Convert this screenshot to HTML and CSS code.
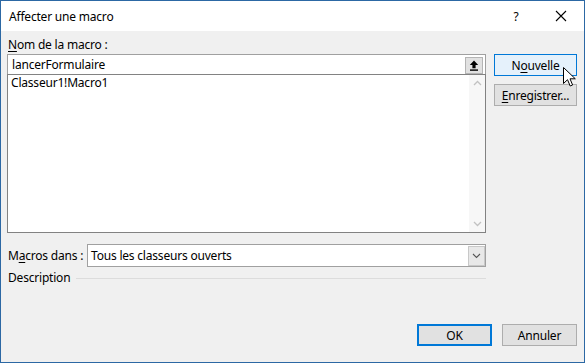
FILE: index.html
```html
<!DOCTYPE html>
<html lang="fr">
<head>
    <meta charset="UTF-8">
    <title>Affecter une macro</title>
    <link rel="stylesheet" href="styles.css">
</head>
<body>
<div class="dialog">
    <div class="titlebar">
        <span class="title">Affecter une macro</span>
        <span class="help">?</span>
        <span class="close">
            <svg width="12" height="12" viewBox="0 0 12 12"><path d="M1 1L11 11M11 1L1 11" stroke="#000" stroke-width="1.1" fill="none"/></svg>
        </span>
    </div>
    <div class="content">
        <div class="main">
            <div class="left">
                <div class="label"><u>N</u>om de la macro :</div>
                <div class="namebox">
                    <span>lancerFormulaire</span>
                    <span class="refbtn">
                        <svg width="10" height="11" viewBox="0 0 10 11"><path d="M5 0.5L0.8 5H3.4V8.3H6.6V5H9.2Z" fill="#000"/><rect x="1" y="9.4" width="8" height="1.4" fill="#000"/></svg>
                    </span>
                </div>
                <div class="listbox">
                    <div class="items">
                        <div class="item">Classeur1!Macro1</div>
                    </div>
                    <div class="scrollbar">
                        <svg width="9" height="6" viewBox="0 0 9 6"><path d="M1 5L4.5 1.5L8 5" stroke="#c2c2c2" stroke-width="1.3" fill="none"/></svg>
                        <svg width="9" height="6" viewBox="0 0 9 6"><path d="M1 1L4.5 4.5L8 1" stroke="#c2c2c2" stroke-width="1.3" fill="none"/></svg>
                    </div>
                </div>
                <div class="row">
                    <span class="rowlabel">M<u>a</u>cros dans :</span>
                    <div class="select">
                        <span>Tous les classeurs ouverts</span>
                        <span class="dropbtn">
                            <svg width="9" height="6" viewBox="0 0 9 6"><path d="M1 1L4.5 4.5L8 1" stroke="#555" stroke-width="1.1" fill="none"/></svg>
                        </span>
                    </div>
                </div>
                <div class="group">
                    <span>Description</span>
                    <span class="rule"></span>
                </div>
            </div>
            <div class="right">
                <div class="btn hot">N<u>o</u>uvelle</div>
                <div class="btn"><u>E</u>nregistrer...</div>
            </div>
        </div>
        <div class="footer">
            <div class="btn default">OK</div>
            <div class="btn">Annuler</div>
        </div>
    </div>
    <svg class="cursor" width="13" height="21" viewBox="0 0 13 21"><path d="M0.5 0.5V16.5L4.5 12.7L7.2 19L9.6 18L7 11.8H12.3Z" fill="#fff" stroke="#000" stroke-width="1"/></svg>
</div>
</body>
</html>
```

FILE: styles.css
```css
body {
    margin: 0;
    font-family: "Noto Sans", "Open Sans", sans-serif;
    font-size: 12px;
    letter-spacing: -0.2px;
    color: #000;
}
.dialog {
    position: relative;
    width: 585px;
    height: 363px;
    box-sizing: border-box;
    border: 1px solid #2c68a4;
    display: flex;
    flex-direction: column;
    background-color: #f0f0f0;
}
.titlebar {
    height: 30px;
    background-color: #fff;
    display: flex;
    align-items: center;
    padding-left: 8px;
    flex-shrink: 0;
}
.title {
    flex: 1;
}
.help {
    width: 20px;
    text-align: center;
    margin-right: 29px;
}
.close {
    width: 12px;
    margin-right: 17px;
    display: flex;
}
.content {
    flex: 1;
    display: flex;
    flex-direction: column;
    padding: 0 7px 16px 6px;
}
.main {
    display: flex;
    gap: 8px;
}
.left {
    width: 479px;
}
.label {
    padding: 6px 0 0 1px;
    line-height: 16px;
    margin-bottom: 1px;
}
u {
    text-decoration-thickness: 1px;
    text-underline-offset: 2px;
}
.namebox {
    height: 20px;
    box-sizing: border-box;
    border: 1px solid #a0a0a0;
    border-bottom: none;
    background-color: #fff;
    display: flex;
    align-items: center;
    padding-left: 4px;
}
.namebox span:first-child {
    flex: 1;
}
.refbtn {
    width: 18px;
    height: 17px;
    box-sizing: border-box;
    background-color: #e1e1e1;
    border: 1px solid #b4b4b4;
    margin: 1px 2px 0 0;
    display: flex;
    align-items: center;
    justify-content: center;
}
.listbox {
    height: 159px;
    box-sizing: border-box;
    border: 1px solid #828282;
    background-color: #fff;
    display: flex;
}
.items {
    flex: 1;
    padding: 1px 3px;
}
.item {
    line-height: 14px;
}
.scrollbar {
    width: 16px;
    background-color: #f7f7f7;
    display: flex;
    flex-direction: column;
    justify-content: space-between;
    align-items: center;
    padding: 5px 0 5px;
}
.row {
    display: flex;
    align-items: center;
    margin-top: 11px;
}
.rowlabel {
    width: 79px;
    padding-left: 1px;
}
.select {
    flex: 1;
    height: 23px;
    box-sizing: border-box;
    border: 1px solid #a0a0a0;
    background-color: #fff;
    display: flex;
    align-items: center;
    padding-left: 3px;
}
.select span:first-child {
    flex: 1;
}
.dropbtn {
    width: 17px;
    height: 20px;
    box-sizing: border-box;
    border: 1px solid #c8c8c8;
    background-color: #e8e8e8;
    display: flex;
    align-items: center;
    justify-content: center;
}
.group {
    display: flex;
    align-items: center;
    gap: 6px;
    margin-top: 3px;
    padding-left: 1px;
    line-height: 16px;
}
.rule {
    flex: 1;
    border-top: 1px solid #dcdcdc;
}
.right {
    padding-top: 23px;
    display: flex;
    flex-direction: column;
    gap: 8px;
}
.btn {
    width: 83px;
    height: 22px;
    box-sizing: border-box;
    border: 1px solid #adadad;
    background-color: #e1e1e1;
    display: flex;
    align-items: center;
    justify-content: center;
}
.btn.hot {
    border-color: #0078d7;
    background-color: #e5f1fb;
}
.footer {
    margin-top: auto;
    display: flex;
    justify-content: flex-end;
    gap: 10px;
}
.footer .btn {
    width: 75px;
}
.btn.default {
    border: 2px solid #0078d7;
}
.cursor {
    position: absolute;
    left: 562px;
    top: 66px;
}
```
